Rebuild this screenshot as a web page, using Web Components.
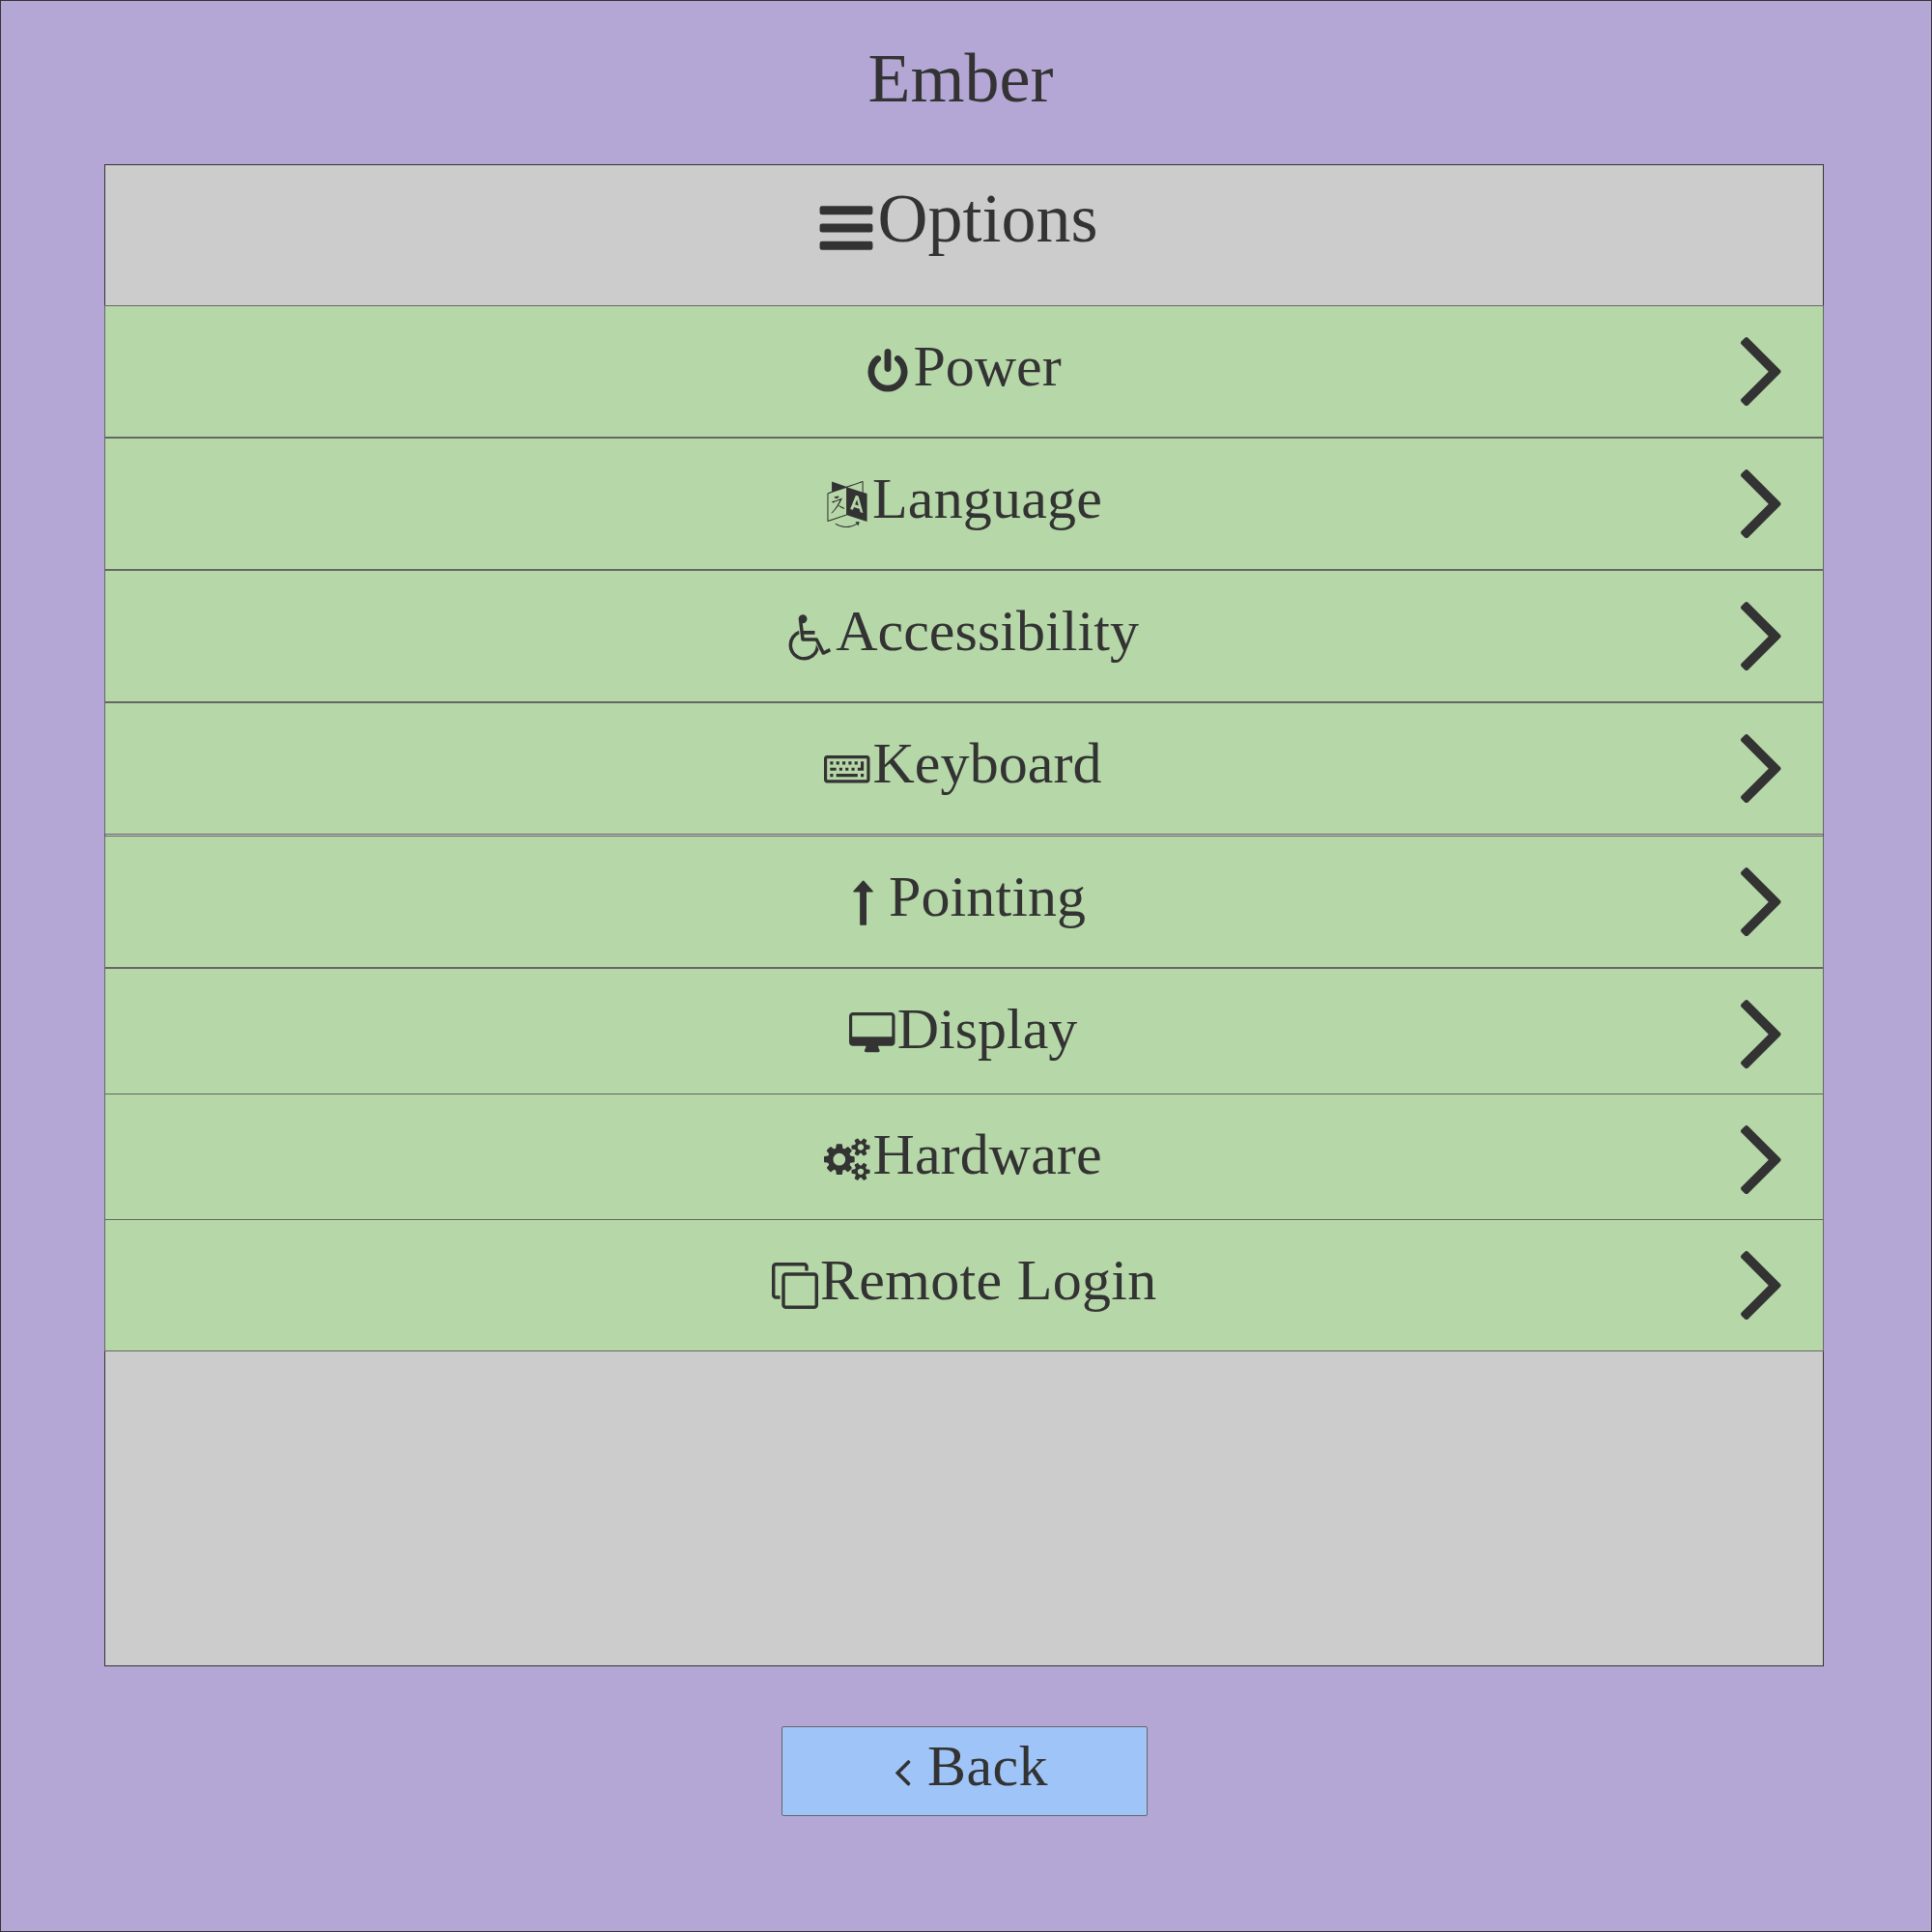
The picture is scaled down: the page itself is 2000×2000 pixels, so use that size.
<!DOCTYPE html>
<html lang="en">
<head>
<meta charset="utf-8">
<title>Ember</title>
<style>
html,body{margin:0;padding:0}
body{width:2000px;height:2000px;overflow:hidden;font-family:"Liberation Serif",serif;color:#333}
</style>
</head>
<body>
<ember-screen>
  <ember-title slot="title">Ember</ember-title>
  <ember-panel>
    <panel-heading slot="heading">Options</panel-heading>
    <option-row icon="power">Power</option-row>
    <option-row icon="language" style="letter-spacing:.2px">Language</option-row>
    <option-row icon="wheelchair" style="letter-spacing:.04px">Accessibility</option-row>
    <option-row icon="keyboard" style="letter-spacing:.08px">Keyboard</option-row>
    <option-row icon="arrow" style="margin-top:1px;letter-spacing:.1px">Pointing</option-row>
    <option-row icon="desktop">Display</option-row>
    <option-row icon="cogs" style="margin-top:-7px;letter-spacing:.08px">Hardware</option-row>
    <option-row icon="clone" style="margin-top:-7px;letter-spacing:.3px;padding-left:2.500px">Remote Login</option-row>
  </ember-panel>
  <back-button slot="footer">Back</back-button>
</ember-screen>
<script>
const svg = (vb, w, h, body) => `<svg viewBox="${vb}" width="${w}" height="${h}" fill="currentColor" aria-hidden="true">${body}</svg>`;
const path = d => `<path d="${d}"/>`;
const smallCog = y => `M1920 ${y}v140q0 16-149 31-12 27-30 52 51 113 51 138 0 4-4 7-122 71-124 71-8 0-46-47t-52-68q-20 2-30 2t-30-2q-14 21-52 68t-46 47q-2 0-124-71-4-3-4-7 0-25 51-138-18-25-30-52-149-15-149-31v-140q0-16 149-31 13-29 30-52-51-113-51-138 0-4 4-7 4-2 35-20t59-34 30-16q8 0 46 46.5t52 67.5q20-2 30-2t30 2q51-71 92-112l6-2q4 0 124 70 4 3 4 7 0 25-51 138 17 23 30 52 149 15 149 31z`;
const ICONS = {
  bars: {vb:'0 0 1792 1792', size:64, dx:0, dy:0, body:'<rect x="128" y="256" width="1536" height="256" rx="64"/><rect x="128" y="768" width="1536" height="256" rx="64"/><rect x="128" y="1280" width="1536" height="256" rx="64"/>'},
  power: {vb:'0 0 1792 1792', size:48, dx:0, dy:-0.5, body:path('M1664 896q0 156-61 298t-164 245-245 164-298 61-298-61-245-164-164-245-61-298q0-182 80.5-343t226.5-270q43-32 95.5-25t83.5 50q32 42 24.5 94.5t-49.5 84.5q-98 74-151.5 181t-53.5 228q0 104 40.5 198.5t109.5 163.5 163.5 109.5 198.5 40.5 198.5-40.5 163.5-109.5 109.5-163.5 40.5-198.5q0-121-53.5-228t-151.5-181q-42-32-49.5-84.5t24.5-94.5q31-43 84-50t95 25q146 109 226.5 270t80.5 343zm-640-768v640q0 52-38 90t-90 38-90-38-38-90v-640q0-52 38-90t90-38 90 38 38 90z')},
  language: {vb:'0 0 1792 1792', size:48, dx:0.3, dy:0, body:path('M782 1078q-1 3-12.5-.5t-31.5-11.5l-20-9q-44-20-87-49-7-5-41-31.5t-38-28.5q-67 103-134 181-81 95-105 110-4 2-19.5 4t-18.5 0q6-4 82-92 21-24 85.5-115t78.5-118q17-30 51-98.5t36-77.5q-8-1-110 33-8 2-27.5 7.5t-34.5 9.5-17 5q-2 2-2 10.5t-1 9.5q-5 10-31 15-23 7-47 0-18-4-28-21-4-6-5-23 6-2 24.5-5t29.5-6q58-16 105-32 100-35 102-35 10-2 43-19.5t44-21.5q9-3 21.5-8t14.5-5.5 6 .5q2 12-1 33 0 2-12.5 27t-26.5 53.5-17 33.5q-25 50-77 131l64 28q12 6 74.5 32t67.5 28q4 1 10.5 25.5t4.5 30.5zm-205-486q3 15-4 28-12 23-50 38-30 12-60 12-26-3-49-26-14-15-18-41l1-3q3 3 19.5 5t26.5 0 58-16q36-12 55-14 17 0 21 17zm698 129l63 227-139-42zm-1108 800l694-232v-1032l-694 233v1031zm1241-317l102 31-181-657-100-31-216 536 102 31 45-110 211 65zm-503-962l573 184v-380zm311 1323l158 13-54 160-40-66q-130 83-276 108-58 12-91 12h-84q-79 0-199.5-39t-183.5-85q-8-7-8-16 0-8 5-13.5t13-5.5q4 0 18 7.5t30.5 16.5 20.5 11q73 37 159.5 61.5t157.5 24.5q95 0 167-14.5t157-50.5q15-7 30.5-15.5t34-19 28.5-16.5zm448-1079v1079l-774-246q-14 6-375 127.5t-368 121.5q-13 0-18-13 0-1-1-3v-1078q3-9 4-10 5-6 20-11 107-36 149-50v-384l558 198q2 0 160.5-55t316-108.5 161.5-53.5q20 0 20 21v418z')},
  wheelchair: {vb:'0 0 1792 1792', size:49.5, dx:-2.2, dy:-1.5, body:path('M1151 1190l102 204q-58 179-210 290t-339 111q-156 0-288.5-77.5t-210-210-77.5-288.5q0-181 104.5-330t274.5-211l17 131q-122 54-195 165.5t-73 244.5q0 185 131.5 316.5t316.5 131.5q126 0 232.5-65t165-175.5 49.5-236.5zm499 149l58 114-256 128q-13 7-29 7-40 0-57-35l-239-477h-472q-24 0-42.5-16.5t-21.5-40.5l-96-779q-2-17 6-42 14-51 57-82.5t97-31.5q66 0 113 47t47 113q0 69-52 117.5t-120 41.5l37 289h423v128h-407l16 128h455q40 0 57 35l228 455z')},
  keyboard: {vb:'0 0 1920 1920', size:47.5, dx:-0.3, dy:10.2, body:'<path fill-rule="evenodd" d="M128 0H1792Q1845 0 1882.500 37.500T1920 128V1024Q1920 1077 1882.500 1114.500T1792 1152H128Q75 1152 37.500 1114.500T0 1024V128Q0 75 37.500 37.500T128 0ZM128 128V1024H1792V128Z"/><path d="M256 256h128v128h-128zM512 256h128v128h-128zM768 256h128v128h-128zM1024 256h128v128h-128zM1280 256h128v128h-128zM1536 256h128v384h-256v-128h128zM256 512h256v128h-256zM640 512h128v128h-128zM896 512h128v128h-128zM1152 512h128v128h-128zM256 768h128v128h-128zM512 768h896v128h-896zM1536 768h128v128h-128z"/>'},
  arrow: {vb:'0 0 1792 1792', size:48, dx:3.2, dy:1.8, body:path('M1149 413q8-19-5-35l-350-384q-10-10-23-10-14 0-24 10l-355 384q-13 16-5 35 9 19 29 19h224v1248q0 14 9 23t23 9h192q14 0 23-9t9-23v-1248h224q21 0 29-19z')},
  desktop: {vb:'-64 0 1920 1920', size:47.5, dx:-0.1, dy:1, body:path('M1728 992v-832q0-13-9.5-22.5t-22.5-9.5h-1600q-13 0-22.5 9.5t-9.5 22.5v832q0 13 9.500 22.500t22.500 9.500h1600q13 0 22.500-9.500t9.500-22.500zm128-832v1088q0 66-47 113t-113 47h-544q0 37 16 77.500t32 71 16 43.500q0 26-19 45t-45 19h-512q-26 0-45-19t-19-45q0-14 16-44t32-70 16-78h-544q-66 0-113-47t-47-113v-1088q0-66 47-113t113-47h1600q66 0 113 47t47 113z')},
  cogs: {vb:'0 0 1920 1920', size:47.5, dx:-0.2, dy:0.6, body:path('M896 896q0-106-75-181t-181-75-181 75-75 181 75 181 181 75 181-75 75-181zm768 512q0-52-38-90t-90-38-90 38-38 90q0 53 37.5 90.5t90.5 37.5 90.5-37.5 37.5-90.5zm0-1024q0-52-38-90t-90-38-90 38-38 90q0 53 37.5 90.5t90.5 37.5 90.5-37.5 37.5-90.5zm-384 421v185q0 10-7 19.5t-16 10.5l-155 24q-11 35-32 76 34 48 90 115 7 11 7 20 0 12-7 19-23 30-82.5 89.5t-78.5 59.5q-11 0-21-7l-115-90q-37 19-77 31-11 108-23 155-7 24-30 24h-186q-11 0-20-7.5t-10-17.5l-23-153q-34-10-75-31l-118 89q-7 7-20 7-11 0-21-8-144-133-144-160 0-9 7-19 10-14 41-53t47-61q-23-44-35-82l-152-24q-10-1-17-9.5t-7-19.5v-185q0-10 7-19.5t16-10.5l155-24q11-35 32-76-34-48-90-115-7-11-7-20 0-12 7-20 22-30 82-89t79-59q11 0 21 7l115 90q34-18 77-32 11-108 23-154 7-24 30-24h186q11 0 20 7.5t10 17.5l23 153q34 10 75 31l118-89q8-7 20-7 11 0 21 8 144 133 144 160 0 8-7 19-12 16-42 54t-45 60q23 48 34 82l152 23q10 2 17 10.5t7 19.5z'+smallCog(1338)+smallCog(314))},
  clone: {vb:'0 0 1792 1792', size:48, dx:0, dy:0, body:path('M1664 1632v-1088q0-13-9.5-22.5t-22.5-9.5h-1088q-13 0-22.5 9.5t-9.5 22.5v1088q0 13 9.5 22.5t22.5 9.5h1088q13 0 22.5-9.5t9.5-22.5zm128-1088v1088q0 66-47 113t-113 47h-1088q-66 0-113-47t-47-113v-1088q0-66 47-113t113-47h1088q66 0 113 47t47 113zm-384-384v160h-128v-160q0-13-9.5-22.5t-22.5-9.5h-1088q-13 0-22.5 9.5t-9.5 22.5v1088q0 13 9.5 22.5t22.5 9.5h160v128h-160q-66 0-113-47t-47-113v-1088q0-66 47-113t113-47h1088q66 0 113 47t47 113z')}
};
const CHEVRON = 'M1171 960q0 13-10 23l-466 466q-10 10-23 10t-23-10l-50-50q-10-10-10-23t10-23l393-393-393-393q-10-10-10-23t10-23l50-50q10-10 23-10t23 10l466 466q10 10 10 23z';

class Base extends HTMLElement {
  connectedCallback() {
    if (!this.shadowRoot) this.attachShadow({mode:'open'}).innerHTML = this.render();
  }
}
customElements.define('glyph-icon', class extends Base {
  render() {
    const i = ICONS[this.getAttribute('name')];
    return `<style>:host{display:block;flex:none}svg{display:block;overflow:visible;margin:${i.dy}px 0 0 ${i.dx}px}</style>${svg(i.vb, i.size, i.size, i.body)}`;
  }
});
customElements.define('ember-title', class extends Base {
  render() { return `<style>:host{display:block;text-align:center;font-size:72px;line-height:80px;padding-right:11px}</style><slot></slot>`; }
});
customElements.define('ember-screen', class extends Base {
  render() { return `<style>
    :host{display:flex;flex-direction:column;align-items:center;box-sizing:border-box;width:2000px;height:2000px;background:#b4a7d6;border:1px solid #333}
    header{height:169px;box-sizing:border-box;padding-top:40px;width:1998px}
    footer{margin-top:62px;padding-right:3px}
    .main{padding-right:4px}
    </style><header><slot name="title"></slot></header><div class="main"><slot></slot></div><footer><slot name="footer"></slot></footer>`; }
});
customElements.define('ember-panel', class extends Base {
  render() { return `<style>
    :host{display:flex;flex-direction:column;box-sizing:border-box;width:1780px;height:1555px;background:#ccc;border:1px solid #333}
    .list{display:flex;flex-direction:column;margin:0 -1px}
    </style><slot name="heading"></slot><div class="list"><slot></slot></div>`; }
});
customElements.define('panel-heading', class extends Base {
  render() { return `<style>
    :host{display:flex;box-sizing:border-box;height:145px;padding-left:735px;font-size:72px;line-height:80px}
    glyph-icon{width:64.6px;margin-top:32.500px}
    span{margin-top:15px}
    </style><glyph-icon name="bars"></glyph-icon><span><slot></slot></span>`; }
});
customElements.define('option-row', class extends Base {
  render() { return `<style>
    :host{display:flex;position:relative;box-sizing:border-box;height:137px;flex:none;background:#b6d7a8;border:1px solid #666;font-size:60px;line-height:60px}
    .label{display:flex;flex:1;justify-content:center;padding-left:83px}
    glyph-icon{width:50px;margin-top:44px}
    span{margin-top:32px}
    .chev{flex:none;width:41.6px;margin:31.900px 43.300px 0 0}
    svg{display:block}
    </style><div class="label"><glyph-icon name="${this.getAttribute('icon')}"></glyph-icon><span><slot></slot></span></div>
    <div class="chev">${svg('589 461 582 998', 41.6, 71.3, path(CHEVRON))}</div>`; }
});
customElements.define('back-button', class extends Base {
  render() { return `<style>
    :host{display:flex;box-sizing:border-box;width:379px;height:93px;background:#9fc5f8;border:1px solid #666;border-radius:2px;font-size:60px;line-height:60px;letter-spacing:.4px;padding-left:117px}
    svg{display:block;margin-top:34.300px;transform:rotate(180deg)}
    span{margin:10px 0 0 17.400px}
    </style>${svg('589 461 582 998', 15.6, 26.7, path(CHEVRON))}<span><slot></slot></span>`; }
});
</script>
</body>
</html>
